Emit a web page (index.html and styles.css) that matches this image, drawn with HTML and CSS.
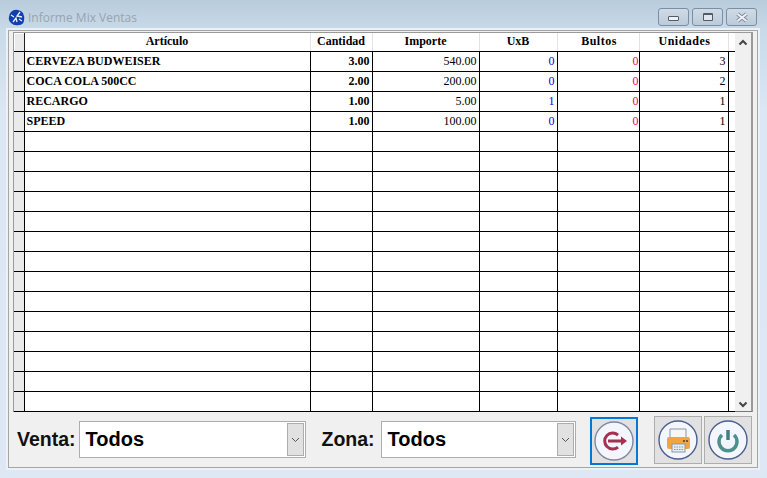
FILE: index.html
```html
<!DOCTYPE html>
<html>
  <head>
    <meta charset="UTF-8" />
    <title>Informe Mix Ventas</title>
    <link rel="stylesheet" href="styles.css">
  </head>
  <body>
    <div class="window">
      <div class="titlebar">
        <svg class="app-icon" width="17" height="17" viewBox="0 0 17 17">
          <path d="M3 3Q6 0 10 1T15 4Q17 8 16 12T11 16Q6 17 3 14T1 8Q1 5 3 3z" fill="#0f3fb0" />
          <path d="M3 6l3 2M12 3L9 7l5 1M5 13l3-4 1 4M14 12l-3-2" stroke="#e8eefb" stroke-width="1.3" fill="none" />
        </svg>
        <span class="title">Informe Mix Ventas</span>
        <div class="win-buttons">
          <div class="win-btn"><span class="min-glyph"></span></div>
          <div class="win-btn"><span class="max-glyph"></span></div>
          <div class="win-btn close">
            <svg width="16" height="11" viewBox="0 0 16 11">
              <path d="M3.5 2L12.5 9M12.5 2L3.5 9" stroke="#7f8b99" stroke-width="4" />
              <path d="M3.5 2L12.5 9M12.5 2L3.5 9" stroke="#eef2f6" stroke-width="2" />
            </svg>
          </div>
        </div>
      </div>

      <div class="client">
        <div class="grid-frame">
          <table class="grid">
            <colgroup>
              <col class="c-mark" />
              <col class="c-art" />
              <col class="c-cant" />
              <col class="c-imp" />
              <col class="c-uxb" />
              <col class="c-bul" />
              <col class="c-uni" />
              <col class="c-end" />
            </colgroup>
            <thead>
              <tr>
                <th class="mark corner"></th>
                <th>Artículo</th>
                <th>Cantidad</th>
                <th>Importe</th>
                <th>UxB</th>
                <th class="wide">Bultos</th>
                <th class="wide">Unidades</th>
                <th class="end"></th>
              </tr>
            </thead>
            <tbody>
              <tr><td class="mark"></td><td class="name">CERVEZA BUDWEISER</td><td class="qty">3.00</td><td class="num">540.00</td><td class="num blue">0</td><td class="num pink">0</td><td class="num">3</td><td></td></tr>
              <tr><td class="mark"></td><td class="name">COCA COLA 500CC</td><td class="qty">2.00</td><td class="num">200.00</td><td class="num blue">0</td><td class="num pink">0</td><td class="num">2</td><td></td></tr>
              <tr><td class="mark"></td><td class="name">RECARGO</td><td class="qty">1.00</td><td class="num">5.00</td><td class="num blue">1</td><td class="num pink">0</td><td class="num">1</td><td></td></tr>
              <tr><td class="mark"></td><td class="name">SPEED</td><td class="qty">1.00</td><td class="num">100.00</td><td class="num blue">0</td><td class="num pink">0</td><td class="num">1</td><td></td></tr>
              <tr><td class="mark"></td><td></td><td></td><td></td><td></td><td></td><td></td><td></td></tr>
              <tr><td class="mark"></td><td></td><td></td><td></td><td></td><td></td><td></td><td></td></tr>
              <tr><td class="mark"></td><td></td><td></td><td></td><td></td><td></td><td></td><td></td></tr>
              <tr><td class="mark"></td><td></td><td></td><td></td><td></td><td></td><td></td><td></td></tr>
              <tr><td class="mark"></td><td></td><td></td><td></td><td></td><td></td><td></td><td></td></tr>
              <tr><td class="mark"></td><td></td><td></td><td></td><td></td><td></td><td></td><td></td></tr>
              <tr><td class="mark"></td><td></td><td></td><td></td><td></td><td></td><td></td><td></td></tr>
              <tr><td class="mark"></td><td></td><td></td><td></td><td></td><td></td><td></td><td></td></tr>
              <tr><td class="mark"></td><td></td><td></td><td></td><td></td><td></td><td></td><td></td></tr>
              <tr><td class="mark"></td><td></td><td></td><td></td><td></td><td></td><td></td><td></td></tr>
              <tr><td class="mark"></td><td></td><td></td><td></td><td></td><td></td><td></td><td></td></tr>
              <tr><td class="mark"></td><td></td><td></td><td></td><td></td><td></td><td></td><td></td></tr>
              <tr><td class="mark"></td><td></td><td></td><td></td><td></td><td></td><td></td><td></td></tr>
              <tr><td class="mark"></td><td></td><td></td><td></td><td></td><td></td><td></td><td></td></tr>
            </tbody>
          </table>
          <div class="scrollbar">
            <svg width="10" height="7" viewBox="0 0 10 7"><path d="M1.5 5.5L5 2l3.5 3.5" stroke="#444" stroke-width="2" fill="none" /></svg>
            <svg width="10" height="7" viewBox="0 0 10 7"><path d="M1.5 1.5L5 5l3.5-3.5" stroke="#444" stroke-width="2" fill="none" /></svg>
          </div>
        </div>

        <div class="footer">
          <label class="field-label">Venta:</label>
          <div class="combo combo-venta">
            <span class="combo-text">Todos</span>
            <span class="combo-btn"><svg width="9" height="6" viewBox="0 0 9 6"><path d="M1 1l3.5 3.5L8 1" stroke="#555" fill="none" /></svg></span>
          </div>
          <label class="field-label zona">Zona:</label>
          <div class="combo combo-zona">
            <span class="combo-text">Todos</span>
            <span class="combo-btn"><svg width="9" height="6" viewBox="0 0 9 6"><path d="M1 1l3.5 3.5L8 1" stroke="#555" fill="none" /></svg></span>
          </div>

          <button class="tool-btn active">
            <svg width="40" height="40" viewBox="0 0 40 40">
              <circle cx="20" cy="20" r="19" fill="#f3f6fd" stroke="#7f88a6" stroke-width="1.4" />
              <path d="M24 14A8 8 0 1 0 24 26" stroke="#a5304f" stroke-width="3" fill="none" />
              <path d="M14 20h14" stroke="#a5304f" stroke-width="3" />
              <path d="M27 15.5l6 4.5-6 4.5z" fill="#a5304f" />
            </svg>
          </button>
          <button class="tool-btn print">
            <svg width="40" height="40" viewBox="0 0 40 40">
              <circle cx="20" cy="20" r="19" fill="#f3f6fd" stroke="#4d5f8f" stroke-width="1.4" />
              <path d="M12 18V9h16v9z" fill="#f6f6f6" stroke="#8a97a5" />
              <rect x="9" y="17" width="23" height="12" rx="2" fill="#f2a444" />
              <rect x="25" y="20" width="2" height="2" fill="#6d5a3a" />
              <rect x="28" y="20" width="2" height="2" fill="#6d5a3a" />
              <rect x="14" y="24" width="13" height="8" fill="#e9ecef" stroke="#8a97a5" />
              <path d="M16 27h9M16 29.500h9" stroke="#8a97a5" stroke-dasharray="1.500 1" />
            </svg>
          </button>
          <button class="tool-btn power">
            <svg width="40" height="40" viewBox="0 0 40 40">
              <circle cx="20" cy="20" r="19" fill="#f3f6fd" stroke="#4d5f8f" stroke-width="1.4" />
              <path d="M14 15A9 9 0 1 0 26 15" stroke="#4f8f8c" stroke-width="3.5" fill="none" />
              <path d="M20 10v10" stroke="#3f7f80" stroke-width="3.5" />
            </svg>
          </button>
        </div>
      </div>
    </div>
  </body>
</html>
```

FILE: styles.css
```css
* {
  box-sizing: border-box;
}

html,
body {
  margin: 0;
  height: 100%;
  overflow: hidden;
}

.window {
  width: 767px;
  height: 478px;
  padding: 0 9px 10px 6px;
  background: linear-gradient(to bottom, #b8ccdc 0, #c9dae8 30px, #dbe7f3 110px, #dde8f4 100%);
  display: flex;
  flex-direction: column;
}

.titlebar {
  height: 30px;
  display: flex;
  align-items: flex-start;
  flex: none;
}

.app-icon {
  margin: 9px 0 0 2px;
}

.title {
  margin: 9px 0 0 3px;
  font-family: "Open Sans", sans-serif;
  font-size: 12px;
  line-height: 17px;
  color: #98a4ae;
}

.win-buttons {
  margin: 8px 1px 0 auto;
  display: flex;
  gap: 3px;
}

.win-btn {
  width: 31px;
  height: 18px;
  border: 1px solid #7b8ea3;
  border-radius: 3px;
  background: linear-gradient(to bottom, #cfdbe6, #bccbd9);
  display: flex;
  align-items: center;
  justify-content: center;
}

.min-glyph {
  width: 11px;
  height: 5px;
  margin-top: 3px;
  background: #eef2f6;
  border: 1px solid #4f5b68;
  border-radius: 1px;
}

.max-glyph {
  width: 10px;
  height: 8px;
  background: #dfe6ed;
  border: 1px solid #4f5b68;
  border-top-width: 2px;
  border-radius: 1px;
}

.client {
  flex: 1;
  background: #f0f0f0;
  border: 1px solid #a5a5a5;
  outline: 2px solid #ecf1f6;
  margin-left: 2px;
  padding: 1px 4px 0 4px;
  display: flex;
  flex-direction: column;
}

.grid-frame {
  height: 380px;
  flex: none;
  display: flex;
  background: #fff;
  border: 1px solid #9a9a9a;
  border-right-width: 2px;
  border-bottom: 1px solid #777;
}

.grid {
  width: 721px;
  height: 378px;
  border-collapse: collapse;
  table-layout: fixed;
  font-family: "Liberation Serif", serif;
  font-size: 12px;
  color: #000;
}

.c-mark { width: 10px; }
.c-art { width: 286px; }
.c-cant { width: 62px; }
.c-imp { width: 107px; }
.c-uxb { width: 78px; }
.c-bul { width: 82px; }
.c-uni { width: 89px; }
.c-end { width: 7px; }

.grid th {
  height: 18px;
  padding: 0;
  font-weight: bold;
  text-align: center;
  border-right: 1px solid #e3e3e3;
  border-bottom: 1px solid #000;
}

.grid th.wide {
  padding-left: 2px;
  letter-spacing: 0.5px;
}

.grid th.end {
  background: #fff;
  border-right: none;
  border-bottom-color: #000;
}

.grid td {
  height: 20px;
  padding: 0 2px;
  border-right: 1px solid #000;
  border-bottom: 1px solid #000;
  white-space: nowrap;
  overflow: hidden;
}

.grid td:last-child {
  border-right: none;
}

.grid .mark {
  background: #eaeaea;
  border-right: 1px solid #000;
  padding: 0;
}

.grid th.corner {
  border-right: 1px solid #222;
  border-bottom-color: #000;
  box-shadow: inset 1px 1px 0 #fff;
}

.grid td.name {
  font-weight: bold;
}

.qty {
  font-weight: bold;
  text-align: right;
}

.num {
  text-align: right;
  color: #000;
}

.num.blue {
  color: #0000f0;
}

.grid td.pink {
  padding-right: 0;
  color: #f0004a;
}

.scrollbar {
  width: 17px;
  background: #f0f0f0;
  display: flex;
  flex-direction: column;
  align-items: center;
  justify-content: space-between;
  padding: 6px 0 3px;
}

.footer {
  flex: 1;
  display: flex;
  align-items: center;
  padding-left: 4px;
}

.field-label {
  font-family: "Liberation Sans", sans-serif;
  font-weight: bold;
  font-size: 19.5px;
  color: #111;
}

.zona {
  margin-left: 16px;
}

.combo {
  height: 37px;
  margin-left: 3px;
  background: #fff;
  border: 1px solid #adadad;
  display: flex;
  align-items: center;
  justify-content: space-between;
  padding: 1px;
}

.combo-venta {
  width: 227px;
}

.combo-zona {
  width: 195px;
  margin-left: 6px;
}

.combo-text {
  padding-left: 5px;
  font-family: "Liberation Sans", sans-serif;
  font-weight: bold;
  font-size: 20px;
  color: #000;
}

.combo-btn {
  width: 17px;
  height: 33px;
  background: #e1e1e1;
  border: 1px solid #adadad;
  display: flex;
  align-items: center;
  justify-content: center;
}

.tool-btn {
  width: 48px;
  height: 48px;
  margin-top: 1px;
  padding: 0;
  background: #e1e1e1;
  border: 1px solid #adadad;
  display: flex;
  align-items: center;
  justify-content: center;
}

.tool-btn.active {
  margin-top: 2px;
  margin-left: 14px;
  border: 2px solid #0078d7;
}

.tool-btn.print {
  margin-left: 16px;
}

.tool-btn.power {
  margin-left: 2px;
}
```
